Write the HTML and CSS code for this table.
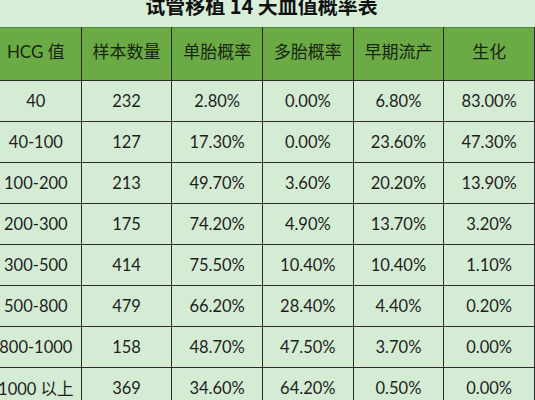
FILE: index.html
```html
<!DOCTYPE html>
<html lang="zh-CN">
<head>
<meta charset="utf-8">
<title>试管移植 14 天血值概率表</title>
<link rel="stylesheet" href="styles.css">
</head>
<body>
<div class="page">
  <div class="title"><span class="title-text">试管移植 14 天血值概率表</span></div>
  <table class="grid">
    <thead>
      <tr><th>HCG 值</th><th>样本数量</th><th>单胎概率</th><th>多胎概率</th><th>早期流产</th><th>生化</th></tr>
    </thead>
    <tbody>
      <tr><td>40</td><td>232</td><td>2.80%</td><td>0.00%</td><td>6.80%</td><td>83.00%</td></tr>
      <tr><td>40-100</td><td>127</td><td>17.30%</td><td>0.00%</td><td>23.60%</td><td>47.30%</td></tr>
      <tr><td>100-200</td><td>213</td><td>49.70%</td><td>3.60%</td><td>20.20%</td><td>13.90%</td></tr>
      <tr><td>200-300</td><td>175</td><td>74.20%</td><td>4.90%</td><td>13.70%</td><td>3.20%</td></tr>
      <tr><td>300-500</td><td>414</td><td>75.50%</td><td>10.40%</td><td>10.40%</td><td>1.10%</td></tr>
      <tr><td>500-800</td><td>479</td><td>66.20%</td><td>28.40%</td><td>4.40%</td><td>0.20%</td></tr>
      <tr><td>800-1000</td><td>158</td><td>48.70%</td><td>47.50%</td><td>3.70%</td><td>0.00%</td></tr>
      <tr><td>1000 以上</td><td>369</td><td>34.60%</td><td>64.20%</td><td>0.50%</td><td>0.00%</td></tr>
    </tbody>
  </table>
</div>
</body>
</html>
```
FILE: styles.css
```css
html, body {
  margin: 0;
  padding: 0;
  background: #d5ecd4;
  overflow: hidden;
}
.page {
  width: 545px;
  margin-left: -10px;
  font-family: Lato, "Noto Sans CJK SC", sans-serif;
  color: #222;
}
.title {
  height: 27px;
  background: #d7eed8;
  display: flex;
  justify-content: center;
  align-items: flex-end;
  padding-right: 2px;
  overflow: hidden;
  box-sizing: border-box;
}
.title-text {
  font-family: "Noto Sans CJK SC", sans-serif;
  font-weight: 700;
  font-size: 20px;
  line-height: 20px;
  color: #111;
  margin-bottom: 11px;
}
.grid {
  width: 545px;
  table-layout: fixed;
  border-collapse: collapse;
}
.grid th, .grid td {
  border: 1px solid #2b2b2b;
  text-align: center;
  padding: 0;
}
.grid th {
  height: 53px;
  background: #6bab46;
  color: #1a2412;
  font-weight: 400;
  font-size: 17px;
  padding-bottom: 8px;
  box-sizing: border-box;
  border-top: 1px solid #4f8a34;
}
.grid td {
  height: 40px;
  font-size: 16.5px;
  background: #d5ecd4;
  color: #1e1e1e;
}
```
